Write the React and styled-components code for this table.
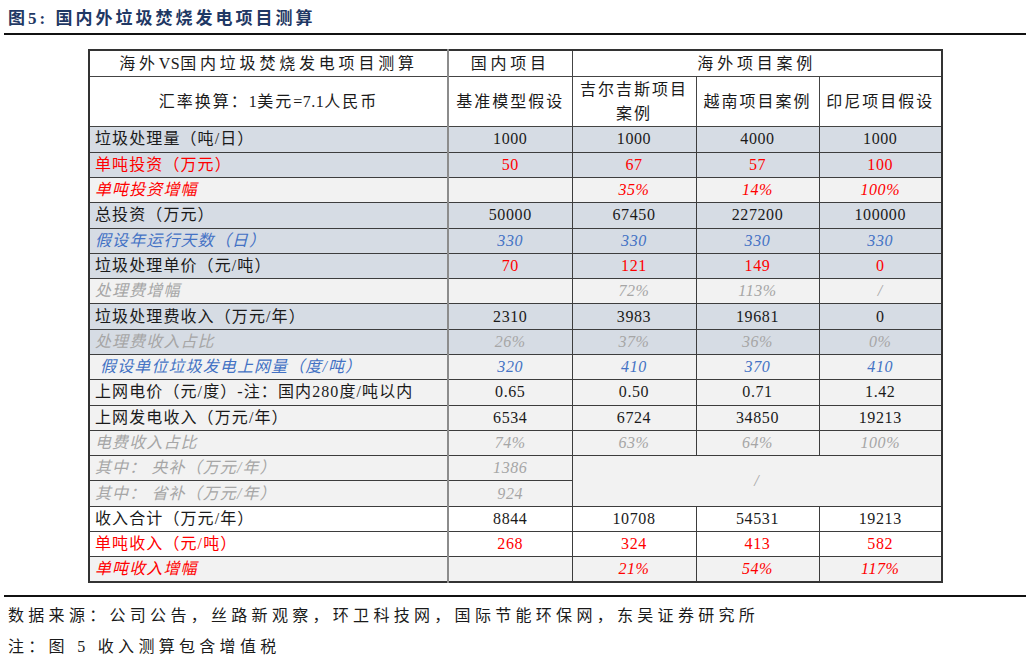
import React from "react";
import styled, { createGlobalStyle } from "styled-components";

const GlobalStyle = createGlobalStyle`
  html, body {
    margin: 0;
    padding: 0;
    background: #ffffff;
  }
  body {
    font-family: "Liberation Serif", "Noto Sans CJK SC", serif;
    color: #1a1a1a;
  }
`;

const BG = {
  blue: "#d6dce4",
  light: "#f2f2f2",
  white: "#ffffff",
};

const TONE = {
  black: "#1a1a1a",
  red: "#ff0000",
  blue: "#4472c4",
  gray: "#a6a6a6",
};

// label, values, background, text tone, italic
const rows = [
  { label: "垃圾处理量（吨/日）", values: ["1000", "1000", "4000", "1000"], bg: "blue", tone: "black" },
  { label: "单吨投资（万元）", values: ["50", "67", "57", "100"], bg: "blue", tone: "red" },
  { label: "单吨投资增幅", values: ["", "35%", "14%", "100%"], bg: "light", tone: "red", italic: true },
  { label: "总投资（万元）", values: ["50000", "67450", "227200", "100000"], bg: "blue", tone: "black" },
  { label: "假设年运行天数（日）", values: ["330", "330", "330", "330"], bg: "blue", tone: "blue", italic: true },
  { label: "垃圾处理单价（元/吨）", values: ["70", "121", "149", "0"], bg: "blue", tone: "black", valueTone: "red" },
  { label: "处理费增幅", values: ["", "72%", "113%", "/"], bg: "light", tone: "gray", italic: true },
  { label: "垃圾处理费收入（万元/年）", values: ["2310", "3983", "19681", "0"], bg: "blue", tone: "black" },
  { label: "处理费收入占比", values: ["26%", "37%", "36%", "0%"], bg: "blue", tone: "gray", italic: true },
  { label: " 假设单位垃圾发电上网量（度/吨）", values: ["320", "410", "370", "410"], bg: "light", tone: "blue", italic: true },
  { label: "上网电价（元/度）-注：国内280度/吨以内", values: ["0.65", "0.50", "0.71", "1.42"], bg: "light", tone: "black" },
  { label: "上网发电收入（万元/年）", values: ["6534", "6724", "34850", "19213"], bg: "light", tone: "black" },
  { label: "电费收入占比", values: ["74%", "63%", "64%", "100%"], bg: "light", tone: "gray", italic: true },
  { label: "其中： 央补（万元/年）", values: ["1386"], bg: "light", tone: "gray", italic: true, mergeStart: true },
  { label: "其中： 省补（万元/年）", values: ["924"], bg: "light", tone: "gray", italic: true },
  { label: "收入合计（万元/年）", values: ["8844", "10708", "54531", "19213"], bg: "white", tone: "black" },
  { label: "单吨收入（元/吨）", values: ["268", "324", "413", "582"], bg: "white", tone: "red" },
  { label: "单吨收入增幅", values: ["", "21%", "54%", "117%"], bg: "light", tone: "red", italic: true },
];

const Page = styled.div`
  width: 1032px;
  height: 662px;
  box-sizing: border-box;
  padding: 0 6px 0 4px;
  display: flex;
  flex-direction: column;
`;

const Title = styled.h1`
  margin: 0;
  height: 33px;
  display: flex;
  align-items: center;
  padding-left: 4px;
  font-size: 17px;
  font-weight: 700;
  letter-spacing: 3px;
  color: #1f3864;
`;

const Rule = styled.div`
  height: 2px;
  background: #111111;
`;

const TableArea = styled.div`
  padding: 14px 0 0 84px;
  height: 563px;
  box-sizing: border-box;
`;

const Table = styled.table`
  border-collapse: collapse;
  table-layout: fixed;
  width: 853px;
  border: 2px solid #333333;
  font-size: 16px;
  letter-spacing: 0.6px;
`;

const HeadRow = styled.tr`
  height: ${(p) => p.$h}px;
`;

const HeadCell = styled.td`
  border: 1px solid #444444;
  text-align: center;
  vertical-align: middle;
  padding: 0 4px;
  line-height: 24px;
  letter-spacing: ${(p) => (p.$wide ? "3.8px" : "2px")};
  color: #1a1a1a;
  background: #ffffff;
  &:first-child {
    border-right: 2px solid #8c8c8c;
  }
`;

const Latin = styled.span`
  letter-spacing: 0.5px;
`;

const Row = styled.tr`
  height: 25.3px;
  background: ${(p) => BG[p.$bg]};
`;

const Cell = styled.td`
  border: 1px solid #3d3d3d;
  padding: 0 4px;
  height: 24px;
  line-height: 22px;
  white-space: nowrap;
  overflow: hidden;
  text-align: center;
  color: ${(p) => TONE[p.$tone]};
  font-style: ${(p) => (p.$italic ? "italic" : "normal")};
`;

const LabelCell = styled(Cell)`
  text-align: left;
  padding-left: 5px;
  white-space: pre;
  letter-spacing: 1.1px;
  border-right: 2px solid #8c8c8c;
`;

const MergedCell = styled(Cell)`
  background: #f2f2f2;
  vertical-align: middle;
`;

const Footer = styled.div`
  padding-top: 3px;
  padding-left: 4px;
  font-size: 16px;
  letter-spacing: 4.3px;
  color: #1a1a1a;
`;

const FootLine = styled.div`
  height: 31px;
  line-height: 31px;
`;

export default function App() {
  return (
    <>
      <GlobalStyle />
      <Page>
        <Title>图5: 国内外垃圾焚烧发电项目测算</Title>
        <Rule />
        <TableArea>
          <Table>
            <colgroup>
              <col style={{ width: 359 }} />
              <col style={{ width: 124 }} />
              <col style={{ width: 124 }} />
              <col style={{ width: 123 }} />
              <col style={{ width: 123 }} />
            </colgroup>
            <tbody>
              <HeadRow $h={27}>
                <HeadCell $wide>
                  海外<Latin>VS</Latin>国内垃圾焚烧发电项目测算
                </HeadCell>
                <HeadCell $wide>国内项目</HeadCell>
                <HeadCell $wide colSpan={3}>海外项目案例</HeadCell>
              </HeadRow>
              <HeadRow $h={50}>
                <HeadCell>
                  汇率换算：<Latin>1</Latin>美元<Latin>=7.1</Latin>人民币
                </HeadCell>
                <HeadCell>基准模型假设</HeadCell>
                <HeadCell>吉尔吉斯项目案例</HeadCell>
                <HeadCell>越南项目案例</HeadCell>
                <HeadCell>印尼项目假设</HeadCell>
              </HeadRow>
              {rows.map((r) => (
                <Row key={r.label} $bg={r.bg}>
                  <LabelCell $tone={r.tone} $italic={r.italic}>
                    {r.label}
                  </LabelCell>
                  {r.values.map((v, i) => (
                    <Cell key={i} $tone={r.valueTone || r.tone} $italic={r.italic}>
                      {v}
                    </Cell>
                  ))}
                  {r.mergeStart && (
                    <MergedCell colSpan={3} rowSpan={2} $tone="gray" $italic>
                      /
                    </MergedCell>
                  )}
                </Row>
              ))}
            </tbody>
          </Table>
        </TableArea>
        <Rule />
        <Footer>
          <FootLine>数据来源：公司公告，丝路新观察，环卫科技网，国际节能环保网，东吴证券研究所</FootLine>
          <FootLine>注：图 5 收入测算包含增值税</FootLine>
        </Footer>
      </Page>
    </>
  );
}
